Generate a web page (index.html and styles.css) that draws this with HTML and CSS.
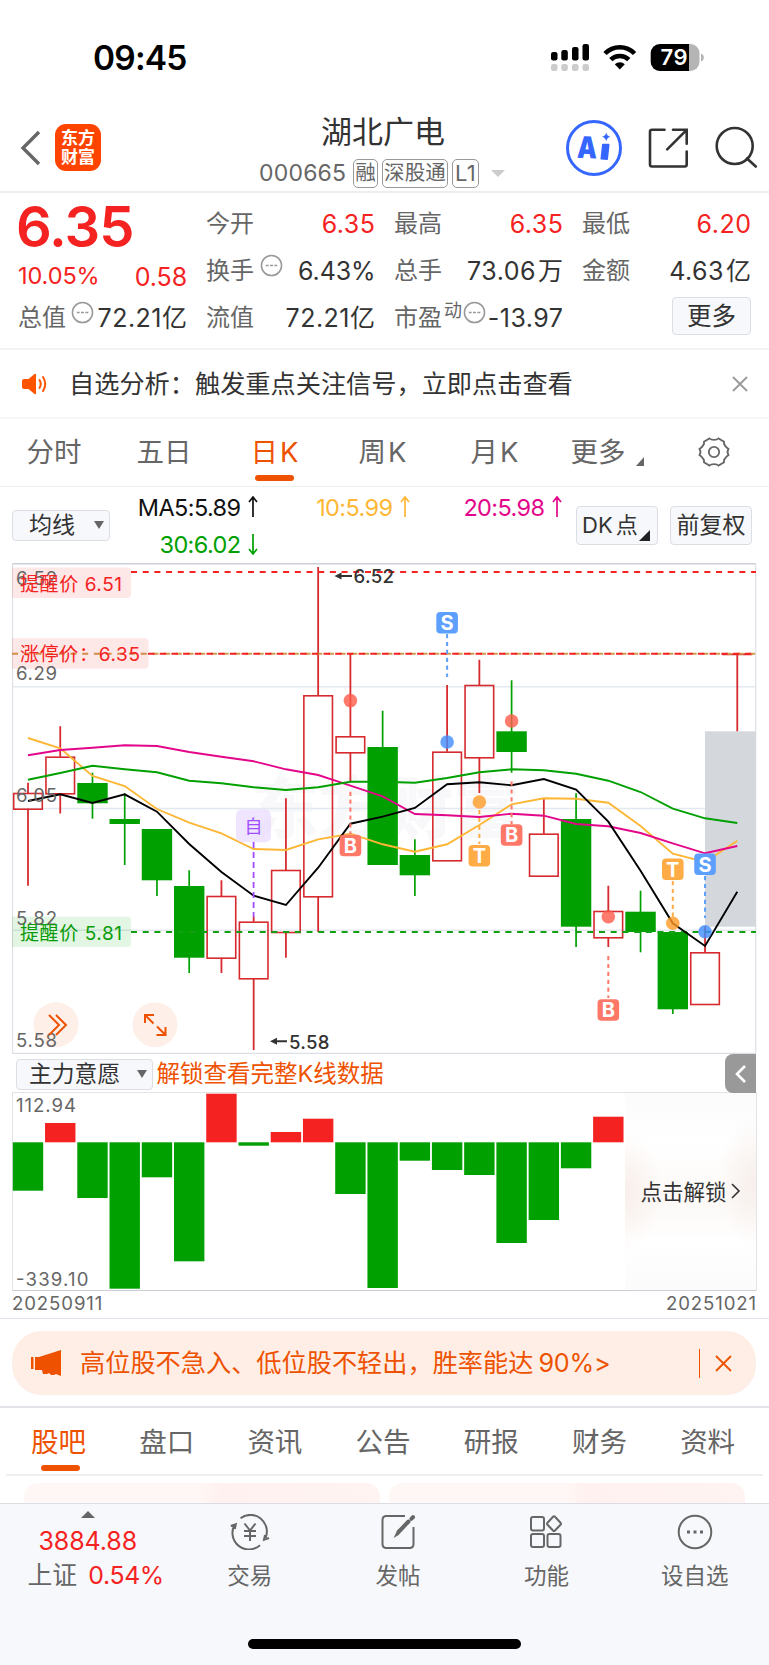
FILE: index.html
```html
<!DOCTYPE html>
<html lang="zh-CN">
<head>
    <meta charset="UTF-8">
    <meta name="viewport" content="width=device-width, initial-scale=1.0">
    <title>湖北广电 000665</title>
    <link rel="stylesheet" href="styles.css">
</head>
<body>
    <div class="status-bar">
        <span class="time">09:45</span>
        <svg class="status-icons" width="156" height="44" viewBox="550 36 156 44">
            <g fill="#000">
                <rect x="551" y="52" width="6.500" height="8.500" rx="2.200"/>
                <rect x="561.300" y="50" width="6.500" height="10.500" rx="2.200"/>
                <rect x="572" y="47" width="6.500" height="13.500" rx="2.200"/>
                <rect x="582.500" y="44" width="6.500" height="16.500" rx="2.200"/>
            </g>
            <g fill="#ccc">
                <rect x="551" y="64" width="6.500" height="7" rx="2.200"/>
                <rect x="561.300" y="64" width="6.500" height="7" rx="2.200"/>
                <rect x="572" y="64" width="6.500" height="7" rx="2.200"/>
                <rect x="582.500" y="64" width="6.500" height="7" rx="2.200"/>
            </g>
            <g fill="none" stroke="#000" stroke-width="4.6">
                <path d="M605 53.500a20.500 20.500 0 0 1 29.600 0"/>
                <path d="M610.800 59.700a12.800 12.800 0 0 1 18 0"/>
            </g>
            <path d="M619.800 69.500l-5-5.300a7.200 7.200 0 0 1 10 0z"/>
            <path d="M659.700 44H690v27h-30.300a9 9 0 0 1-9-9v-9a9 9 0 0 1 9-9z"/>
            <path d="M689 44h1.500a9 9 0 0 1 9 9v9a9 9 0 0 1-9 9H689z" fill="#b4b4b4"/>
            <path d="M701 53.500q2.800 1 2.800 4t-2.800 4z" fill="#b4b4b4"/>
            <text class="battery" x="660.500" y="65.200" textLength="27">79</text>
        </svg>
    </div>

    <div class="nav">
        <svg class="back" width="22" height="38" viewBox="0 0 22 38"><path d="M19 3L3 19l16 16"/></svg>
        <div class="logo">东方<br>财富</div>
        <div class="stock">
            <div class="stock-name">湖北广电</div>
            <div class="stock-code">000665<span class="tag first">融</span><span class="tag">深股通</span><span class="tag l1">L1</span><i class="caret"></i></div>
        </div>
        <svg class="nav-icons" width="196" height="60" viewBox="564 118 196 60">
            <circle cx="594" cy="148" r="26.500" fill="none" stroke="#3566ff" stroke-width="3"/>
            <text class="ai" x="577" y="158" textLength="20" lengthAdjust="spacingAndGlyphs" transform="rotate(2 585 150)">A</text>
            <path d="M603 143.800h5.500q1.200 0 1 1.200l-1.500 14q0 1-1.200.9l-5.300-.3q-1.200 0-1-1.200l1.500-13.600q0-1 1-1z" fill="#3566ff"/>
            <path d="M606.200 132.500q.8 3.700 4.300 4.200-3.500.8-4.300 4.600-.8-3.900-4.300-4.600 3.500-.5 4.300-4.200z" fill="#3566ff"/>
            <g class="line-icon">
                <path d="M664.500 129.800h-12.500q-2 0-2 2v32.700q0 2 2 2h32.700q2 0 2-2v-13"/>
                <path d="M673 129.800h13.700v14M686.700 129.800l-19.500 19.500"/>
                <circle cx="734.700" cy="146" r="18"/>
                <path d="M747 158.500l8.800 8"/>
            </g>
        </svg>
    </div>

    <div class="quote">
        <div class="quote-main">
            <div class="price">6.35</div>
            <div class="change"><span class="pct">10.05%</span><span>0.58</span></div>
            <div class="cell"><label>总值</label><svg class="more-dot" viewBox="0 0 24 24"><circle cx="12" cy="12" r="10.500"/><path d="M6 12h3M10.500 12h3M15 12h3"/></svg><b>72.21亿</b></div>
        </div>
        <div class="quote-grid">
            <div class="cell"><label>今开</label><b class="red">6.35</b></div>
            <div class="cell"><label>最高</label><b class="red">6.35</b></div>
            <div class="cell"><label>最低</label><b class="red">6.20</b></div>
            <div class="cell"><label>换手</label><svg class="more-dot gap" viewBox="0 0 24 24"><circle cx="12" cy="12" r="10.500"/><path d="M6 12h3M10.500 12h3M15 12h3"/></svg><b class="pct-value">6.43%</b></div>
            <div class="cell"><label>总手</label><b>73.06<span class="unit">万</span></b></div>
            <div class="cell"><label>金额</label><b>4.63<span class="unit">亿</span></b></div>
            <div class="cell"><label>流值</label><b>72.21亿</b></div>
            <div class="cell"><label>市盈</label><sup>动</sup><svg class="more-dot tight" viewBox="0 0 24 24"><circle cx="12" cy="12" r="10.500"/><path d="M6 12h3M10.500 12h3M15 12h3"/></svg><b>-13.97</b></div>
            <div class="cell end"><button class="btn more">更多</button></div>
        </div>
    </div>

    <div class="notice">
        <svg width="28" height="24" viewBox="0 0 28 24">
            <path d="M3 7h4.500l6-5q1.500-1 1.500 1v18q0 2-1.500 1l-6-5H3q-2 0-2-2V9q0-2 2-2z" fill="#ff5500"/>
            <path d="M18.500 8q2.500 4 0 8M22 5q4.500 7 0 14" fill="none" stroke="#ff5500" stroke-width="2" stroke-linecap="round"/>
        </svg>
        <span class="notice-text">自选分析：触发重点关注信号，立即点击查看</span>
        <svg class="close" width="16" height="16" viewBox="0 0 16 16"><path d="M1 1l14 14M15 1L1 15"/></svg>
    </div>

    <div class="period-tabs">
        <span>分时</span>
        <span>五日</span>
        <span class="k active">日K</span>
        <span class="k">周K</span>
        <span class="k">月K</span>
        <span>更多<i class="corner"></i></span>
        <svg width="32" height="30" viewBox="0 0 32 30">
            <path d="M11.500 1.500q1.200 1.300 4.500 1.300t4.500-1.300L26 4.600q-.8 3.400 4.500 7.400-2 3 0 6-5.300 4-4.500 7.400l-5.500 3.100q-1.200-1.300-4.500-1.300t-4.500 1.300L6 25.400q.8-3.400-4.500-7.400 2-3 0-6Q6.800 8 6 4.600z"/>
            <circle cx="16" cy="15" r="5.200"/>
        </svg>
    </div>

    <div class="ma-bar">
        <button class="btn select ma-select">均线<i class="down"></i></button>
        <div class="ma-legend">
            <span class="ma5">MA5:5.89<svg viewBox="0 0 10 22"><path d="M5 21V1M1 6l4-5 4 5"/></svg></span>
            <span class="ma10">10:5.99<svg viewBox="0 0 10 22"><path d="M5 21V1M1 6l4-5 4 5"/></svg></span>
            <span class="ma20">20:5.98<svg viewBox="0 0 10 22"><path d="M5 21V1M1 6l4-5 4 5"/></svg></span>
            <span class="ma30">30:6.02<svg viewBox="0 0 10 22"><path d="M5 1v20M1 16l4 5 4-5"/></svg></span>
        </div>
        <button class="btn dk">DK<span>点</span><i class="dk-corner"></i></button>
        <button class="btn adjust">前复权</button>
    </div>

    <svg class="k-chart" width="745" height="492" viewBox="12 563 745 492">
        <text class="watermark" x="252" y="833">东方财富</text>
        <g stroke="#e4e8f0" stroke-width="1.500">
            <path d="M12 686.700h744M12 808.500h744M12 930.300h744"/>
        </g>
        <path d="M12 563.700h744" stroke="#cdcfd8" stroke-width="1.400"/>
        <path d="M12.500 563v490.500M755.700 563v490.500M12 1053.300h744" stroke="#dcdfe5" stroke-width="1.200" fill="none"/>
        <rect x="705" y="731.300" width="51" height="195.400" fill="#d4d7dc"/>
        <g id="candles"></g>
        <g id="levels" fill="none" stroke-width="2">
            <path d="M131 572h625" stroke="#f52222" stroke-dasharray="6 5.700"/>
            <path d="M12 653.800h744" stroke="#cf9a4c" stroke-dasharray="6 5.700"/>
            <path d="M148 653.800h608" stroke="#f52222" stroke-dasharray="6.500 5.200"/>
            <path d="M131 932h625" stroke="#12a012" stroke-dasharray="6 5.700"/>
        </g>
        <g id="averages"></g>
        <g>
            <path class="tip-up" d="M12 567.500h115q4 0 4 4v22.500q0 4-4 4H12z"/>
            <path class="tip-up" d="M12 638.300h132.500q4 0 4 4v22.500q0 4-4 4H12z"/>
            <path class="tip-down" d="M12 916.700h115q4 0 4 4v22.300q0 4-4 4H12z"/>
        </g>
        <g fill="#fef0e9">
            <circle cx="56" cy="1024.700" r="22.500"/>
            <circle cx="155" cy="1024.700" r="22.500"/>
        </g>
        <g class="axis">
            <text x="16" y="584.500" textLength="41">6.52</text>
            <text x="16" y="679.700" textLength="41">6.29</text>
            <text x="16" y="801.700" textLength="41">6.05</text>
            <text x="16" y="924.700" textLength="41">5.82</text>
            <text x="16" y="1047" textLength="41">5.58</text>
        </g>
        <g class="tip-text">
            <text x="20" y="590.500" textLength="102">提醒价 6.51</text>
            <text x="20" y="661" textLength="120">涨停价：6.35</text>
            <text x="20" y="940" textLength="102" class="green">提醒价 5.81</text>
        </g>
        <g fill="none" stroke="#ee5200" stroke-width="2">
            <path d="M49 1015l10 10-10 10M56 1015l10 10-10 10"/>
            <path d="M145 1023v-8h9M145 1015l8.500 8.500M165.500 1027v8h-9M165.500 1035l-8.500-8.500"/>
        </g>
        <g class="extreme">
            <path d="M341 576h11M276 1041.300h11" stroke="#333" stroke-width="2"/>
            <path d="M334.500 576l7-3.500v7zM270 1041.300l7-3.500v7z"/>
            <text x="353.500" y="582.800" textLength="40.500">6.52</text>
            <text x="289" y="1048.800" textLength="40.500">5.58</text>
        </g>
        <g id="marks"></g>
    </svg>

    <div class="indicator-bar">
        <button class="btn select ind-select">主力意愿<i class="down"></i></button>
        <span class="unlock-tip">解锁查看完整K线数据</span>
        <div class="drawer"><svg width="12" height="20" viewBox="0 0 12 20"><path d="M10 2L2 10l8 8"/></svg></div>
    </div>

    <div class="sub-chart">
        <svg id="bars" width="744" height="198" viewBox="12 1092 744 198">
            <g id="barGroup"></g>
            <g class="axis">
                <text x="16" y="1111.700" textLength="60">112.94</text>
                <text x="16" y="1285.500" textLength="72.500">-339.10</text>
            </g>
        </svg>
        <div class="unlock">点击解锁<svg width="10" height="16" viewBox="0 0 10 16"><path d="M1 1l7 7-7 7"/></svg></div>
    </div>
    <div class="dates"><span>20250911</span><span>20251021</span></div>

    <div class="promo">
        <svg width="32" height="28" viewBox="0 0 32 28">
            <path d="M1 8h2.500v12H1zM5 8h4L31 1v26l-5-2-2 1-3 0-2-2-2 1-4 0-1-4H5z" fill="#ee5200"/>
        </svg>
        <span class="promo-text">高位股不急入、低位股不轻出，胜率能达<em>90%&gt;</em></span>
        <i class="sep"></i>
        <svg class="promo-close" width="17" height="17" viewBox="0 0 17 17"><path d="M1 1l15 15M16 1L1 16"/></svg>
    </div>

    <div class="info-tabs">
        <span class="active">股吧</span>
        <span>盘口</span>
        <span>资讯</span>
        <span>公告</span>
        <span>研报</span>
        <span>财务</span>
        <span>资料</span>
    </div>
    <div class="cards">
        <div class="card"></div>
        <div class="card"></div>
    </div>

    <div class="bottom-bar">
        <div class="index">
            <i class="up"></i>
            <div class="index-value">3884.88</div>
            <div class="index-pct">上证<span>0.54%</span></div>
        </div>
        <div class="action">
            <svg width="40" height="36" viewBox="0 0 40 36">
                <path d="M10.500 4.200A16.500 16.500 0 0 1 35.500 24M30 31.200A16.500 16.500 0 0 1 4.500 11M.8 12l5-1.800-1 4.800M39 24l-5 1.800 1-4.800"/>
                <path d="M14.500 9.500l5.500 7 5.500-7M20 16.500V27M14 17h12M14 22h12"/>
            </svg>
            交易
        </div>
        <div class="action">
            <svg width="40" height="36" viewBox="0 0 40 36">
                <path d="M27 2H8.500Q4.500 2 4.500 6v24q0 4 4 4h23q4 0 4-4V13"/>
                <path d="M33.500 4.800l1.500-1.700M30.500 7.500L20.500 18" stroke-width="4" stroke-linecap="round"/><path d="M18.500 18l-3 6 6-3.500z" fill="#666" stroke="none"/>
            </svg>
            发帖
        </div>
        <div class="action">
            <svg width="40" height="36" viewBox="0 0 40 36">
                <rect x="5" y="3" width="13" height="13.500" rx="2"/>
                <rect x="5" y="20" width="13" height="13" rx="2"/>
                <rect x="21.500" y="20" width="13" height="13" rx="2"/>
                <path d="M27 2.800q1-1 2 0l5.500 5.900q1 1 0 2L29 16.500q-1 1-2 0l-5.500-5.800q-1-1 0-2z"/>
            </svg>
            功能
        </div>
        <div class="action">
            <svg width="40" height="36" viewBox="0 0 40 36">
                <circle cx="20" cy="18" r="16.300"/>
                <path d="M12 18h3M18.500 18h3M25 18h3" stroke-width="3"/>
            </svg>
            设自选
        </div>
        <div class="home"></div>
    </div>
    <script src="script.js"></script>
</body>
</html>
```
FILE: styles.css
```css
body {
    margin: 0;
    width: 769px;
    height: 1665px;
    overflow: hidden;
    background: #fff;
    color: #333;
    font-family: Inter, "Noto Sans CJK SC", sans-serif;
    font-size: 24px;
}
* {
    box-sizing: border-box;
}
svg {
    display: block;
    flex: none;
}
i, em {
    font-style: normal;
}
.status-bar {
    height: 108px;
    padding: 36px 63px 0 93px;
    display: flex;
    justify-content: space-between;
}
.time {
    font-size: 33.5px;
    font-weight: 600;
    line-height: 44px;
    color: #000;
    letter-spacing: -0.8px;
}
.battery {
    font-size: 22px;
    font-weight: 600;
    fill: #fff;
}

/* header */
.nav {
    height: 85px;
    padding: 10px 9px 0 20px;
    display: flex;
    align-items: flex-start;
    border-bottom: 2px solid #ededf0;
}
.back {
    margin-top: 11px;
    fill: none;
    stroke: #666;
    stroke-width: 3.4;
}
.logo {
    width: 46px;
    height: 47px;
    margin: 6px 0 0 13px;
    padding-top: 5px;
    border-radius: 11px;
    background: #ff4400;
    color: #fff;
    font-size: 17px;
    font-weight: 700;
    line-height: 19px;
    text-align: center;
}
.stock {
    width: 463px;
    padding-left: 158px;
}
.stock-name {
    margin-left: 62px;
    margin-top: -5px;
    font-size: 31px;
    line-height: 38px;
}
.stock-code {
    display: flex;
    align-items: center;
    margin-top: 8px;
    height: 29px;
    font-size: 23px;
    line-height: 29px;
    letter-spacing: 0.2px;
    color: #666;
}
.tag {
    height: 29px;
    margin-left: 4px;
    padding: 0 1px;
    border: 1.5px solid #999;
    border-radius: 5px;
    font-size: 20.500px;
    line-height: 26px;
}
.tag.first {
    margin-left: 7px;
}
.tag.l1 {
    padding: 0 2px;
    font-size: 22px;
}
.caret {
    margin: 0 0 0 12px;
    border: 7px solid transparent;
    border-top-color: #ccc;
    border-bottom: 0;
}
.ai {
    font-size: 30px;
    font-weight: 900;
    fill: #3566ff;
}
.line-icon {
    fill: none;
    stroke: #333;
    stroke-width: 2.6;
    stroke-linecap: round;
}

/* quote */
.quote {
    height: 157px;
    padding: 7px 18px 0 18px;
    display: flex;
    border-bottom: 2px solid #f2f2f4;
}
.quote-main {
    width: 169px;
    margin-right: 19px;
}
.price {
    height: 53px;
    font-size: 56px;
    font-weight: 600;
    line-height: 54px;
    letter-spacing: -1px;
    color: #f52222;
    margin-left: -2px;
}
.change {
    display: flex;
    justify-content: space-between;
    height: 41px;
    padding-top: 4px;
    font-size: 25px;
    line-height: 41px;
    letter-spacing: -0.1px;
    color: #f52222;
}
.pct {
    font-size: 23.5px;
    line-height: 38px;
}
.quote-grid {
    display: grid;
    grid-template-columns: 169px 169px 169px;
    grid-template-rows: 47px 47px 47px;
    column-gap: 19px;
}
.cell {
    display: flex;
    height: 47px;
    line-height: 48px;
    white-space: nowrap;
}
.cell label {
    color: #666;
}
.cell b {
    margin-left: auto;
    font-size: 25px;
    font-weight: 400;
    letter-spacing: 0.5px;
    margin-right: -0.5px;
}
.cell b.red {
    color: #f52222;
}
.cell b.pct-value {
    letter-spacing: -0.1px;
}
.cell sup {
    margin-left: 2px;
    font-size: 18px;
    line-height: 33px;
    color: #666;
    vertical-align: baseline;
}
.unit {
    margin-left: 2px;
}
.cell.end {
    justify-content: flex-end;
    padding-top: 3px;
}
.more-dot {
    width: 23px;
    height: 23px;
    margin: 7px -8px 0 5px;
    fill: none;
    stroke: #999;
    stroke-width: 1.6;
}
.more-dot.gap {
    margin-left: 6px;
}
.more-dot.tight {
    margin-left: 1px;
}
.btn {
    border: 1.5px solid #dcdee4;
    border-radius: 4px;
    background: #f7f8fb;
    padding: 0;
    color: #333;
    font-family: inherit;
    font-size: 23px;
    white-space: nowrap;
}
.more {
    width: 79px;
    height: 38px;
    font-size: 24.5px;
    line-height: 35px;
}

.notice {
    height: 69px;
    display: flex;
    align-items: center;
    padding: 1px 21px 0;
    border-bottom: 2px solid #f5f5f7;
}
.notice-text {
    margin-left: 20px;
    font-size: 25.2px;
    line-height: 40px;
}
.close {
    margin-left: auto;
    fill: none;
    stroke: #999;
    stroke-width: 1.8;
}

/* period tabs */
.period-tabs {
    height: 68px;
    display: grid;
    grid-template-columns: 110px 114px 108px 112px 100px 127px 32px;
    padding-left: 26.5px;
    font-size: 27.500px;
    line-height: 67px;
    color: #666;
    border-bottom: 1.5px solid #efeff2;
}
.period-tabs .k {
    letter-spacing: 2px;
}
.period-tabs svg {
    margin-top: 18px;
    fill: none;
    stroke: #666;
    stroke-width: 1.8;
}
.period-tabs .active {
    color: #ee5200;
}
.period-tabs .active::after,
.info-tabs .active::after {
    content: "";
    display: block;
    width: 39px;
    height: 6px;
    margin: -11px 0 0 4.5px;
    border-radius: 3px;
    background: #ee5200;
}
.corner {
    display: inline-block;
    margin-left: 10px;
    border-left: 8px solid transparent;
    border-bottom: 9px solid #666;
    vertical-align: -4px;
}

/* moving averages */
.ma-bar {
    height: 76px;
    display: flex;
    padding-left: 12px;
}
.select {
    display: flex;
    justify-content: space-between;
    align-items: center;
    height: 31px;
    line-height: 28px;
}
.down {
    border: 5px solid transparent;
    border-top: 8px solid #666;
    border-bottom: 0;
}
.ma-select {
    width: 97.5px;
    margin-top: 22.5px;
    padding: 0 5px 0 16px;
    font-size: 23px;
}
.ma-legend {
    display: grid;
    grid-template-columns: 120px 152px 152px;
    grid-template-rows: 37px 37px;
    justify-items: end;
    margin-left: 28px;
    padding-top: 1.5px;
    line-height: 37px;
    font-size: 23.5px;
}
.ma-legend span {
    display: flex;
    align-items: center;
    letter-spacing: -0.6px;
}
.ma-legend svg {
    width: 10px;
    height: 22px;
    margin-left: 7px;
    fill: none;
    stroke: currentColor;
    stroke-width: 1.7;
}
.ma5 { color: #111; }
.ma10 { color: #fdb735; }
.ma20 { color: #e3068a; }
.ma30 { color: #00a000; }
.dk {
    display: flex;
    width: 82px;
    height: 39px;
    margin: 18.5px 12px 0 14.5px;
    padding-left: 5px;
    line-height: 37px;
    font-size: 22px;
}
.dk span {
    margin-left: 3px;
}
.dk-corner {
    align-self: flex-end;
    margin: 0 0 3px 1px;
    border-left: 11px solid transparent;
    border-bottom: 11px solid #222;
}
.adjust {
    width: 82px;
    height: 39px;
    margin-top: 18.5px;
    line-height: 37px;
}

/* candlestick chart */
.k-chart {
    height: 492px;
    margin: 0 0 -1px 12px;
}
.watermark {
    font-size: 67px;
    font-weight: 900;
    fill: #f8f8fa;
}
.axis {
    font-size: 18.6px;
    fill: #666;
}
.tip-up {
    fill: #f52222;
    fill-opacity: 0.11;
}
.tip-down {
    fill: #00a000;
    fill-opacity: 0.11;
}
.tip-text {
    font-size: 19px;
    fill: #f52222;
}
.tip-text .green {
    fill: #0a9c0a;
}
.extreme {
    font-size: 18.6px;
    font-weight: 500;
    fill: #333;
}
.mark-letter {
    font-size: 20px;
    font-weight: 700;
    fill: #fff;
    text-anchor: middle;
}
.mark-zi {
    font-size: 18px;
    fill: #a04dff;
    text-anchor: middle;
}

.indicator-bar {
    height: 39px;
    display: flex;
    padding: 0 13px 0 16px;
}
.ind-select {
    width: 137px;
    margin-top: 4.5px;
    padding: 0 5px 0 12px;
    font-size: 22.8px;
}
.unlock-tip {
    margin-left: 3.5px;
    font-size: 23.5px;
    line-height: 39px;
    color: #ee5200;
}
.drawer {
    width: 31px;
    height: 39px;
    margin-left: auto;
    padding: 10px 0 0 10px;
    border-radius: 8px 0 0 8px;
    background: #999;
}
.drawer path {
    fill: none;
    stroke: #fff;
    stroke-width: 2.6;
}

/* histogram */
.sub-chart {
    display: flex;
    width: 745px;
    height: 199px;
    margin: -1px 0 0 11.500px;
    border: 1.5px solid #e1e3e8;
    border-bottom-color: #cdcfd8;
}
#bars {
    margin: -1px -131px 0 -1px;
}
.unlock {
    display: flex;
    align-items: center;
    width: 131px;
    padding: 0 0 2px 16px;
    font-size: 21.500px;
    white-space: nowrap;
    background:
        radial-gradient(ellipse 38px 60px at 0 50%, #f9efeb, transparent),
        radial-gradient(ellipse 38px 65px at 100% 45%, #f7efeb, transparent),
        linear-gradient(#fbfbfc, #fff 25%, #fcf9f7 55%, #fff 75%, #fbfbfc);
}
.unlock svg {
    margin-left: 4px;
    fill: none;
    stroke: #333;
    stroke-width: 1.6;
}
.dates {
    display: flex;
    justify-content: space-between;
    height: 28px;
    padding: 0 12px 0 12px;
    border-bottom: 1.5px solid #e2e2ea;
    font-size: 18.6px;
    line-height: 25px;
    letter-spacing: 0.9px;
    color: #666;
}

.promo {
    display: flex;
    align-items: center;
    height: 64px;
    margin: 12px 13px 0 12px;
    padding: 0 24px 0 18px;
    border-radius: 30px;
    background: #feeee6;
    color: #ee5200;
}
.promo-text {
    margin-left: 18px;
    font-size: 25.2px;
    line-height: 60px;
}
.promo em {
    margin-left: 5px;
    letter-spacing: -0.2px;
}
.sep {
    width: 1.5px;
    height: 29px;
    margin-left: auto;
    background: #ee5200;
}
.promo-close {
    margin-left: 15px;
    fill: none;
    stroke: #ee5200;
    stroke-width: 1.8;
}

.info-tabs {
    display: grid;
    grid-template-columns: repeat(7, 108.2px);
    height: 70px;
    margin: 11px 6px 0;
    padding-left: 25px;
    font-size: 27.5px;
    line-height: 72px;
    color: #666;
    border-bottom: 2px solid #efeff1;
    position: relative;
}
.info-tabs::before {
    content: "";
    position: absolute;
    left: -6px;
    top: 0;
    width: 769px;
    height: 1.5px;
    background: #e4e4e8;
}
.info-tabs .active {
    color: #ee5200;
}
.info-tabs .active::after {
    margin: -13px 0 0 9.5px;
}
.cards {
    display: flex;
    gap: 9px;
    height: 27px;
    padding: 7px 24px 0;
}
.card {
    width: 356px;
    border-radius: 14px 14px 0 0;
    background: linear-gradient(90deg, #fff7f5 50%, #fff1ef 55%, #fff4f2);
}

/* bottom bar */
.bottom-bar {
    position: relative;
    display: flex;
    height: 162px;
    border-top: 1.5px solid #dcdde2;
    background: #f7f8fb;
    color: #666;
    font-size: 22.5px;
}
.index {
    display: flex;
    flex-direction: column;
    align-items: center;
    width: 175.5px;
    padding: 7px 0 0;
    font-size: 25px;
    letter-spacing: -0.1px;
}
.up {
    border: 7px solid transparent;
    border-bottom-color: #666;
    border-top: 0;
}
.index-value {
    margin-top: 7px;
    line-height: 32px;
    color: #f52222;
}
.index-pct {
    padding-left: 16px;
    line-height: 36px;
    font-size: 24.8px;
    letter-spacing: 0;
}
.index-pct span {
    margin-left: 11px;
    color: #f52222;
    letter-spacing: -0.3px;
}
.action {
    display: flex;
    flex-direction: column;
    align-items: center;
    width: 148.4px;
    padding-top: 10px;
    line-height: 38px;
}
.action svg {
    margin-bottom: 7px;
    fill: none;
    stroke: #666;
    stroke-width: 2;
}
.home {
    position: absolute;
    left: 248px;
    bottom: 16px;
    width: 273px;
    height: 10px;
    border-radius: 5px;
    background: #000;
}
```
FILE: script.js
```js
const STEP = 32.24;
const FIRST = 28;
const cx = i => FIRST + STEP * i;

// direction, high, low, body top, body bottom
const candles = [
    ['up', 782.7, 885.7, 793, 808.7],
    ['up', 726.3, 813.5, 756.7, 793.3],
    ['down', 772.7, 818.7, 783, 803.3],
    ['down', 793.3, 865, 819, 824],
    ['down', 829, 896, 829, 880.3],
    ['down', 870.3, 973, 886, 957.7],
    ['up', 880.3, 973, 896, 957.7],
    ['up', 916.7, 1050, 921.7, 978.3],
    ['up', 798.3, 957.7, 870, 932],
    ['up', 567, 932, 695.3, 896.3],
    ['up', 654, 781.7, 736.3, 752.3],
    ['down', 710.7, 865, 747, 865],
    ['down', 839.3, 896, 855, 875.3],
    ['up', 685, 860.3, 751.7, 860.3],
    ['up', 659.7, 793, 685, 757.3],
    ['down', 680.3, 772.7, 731.3, 752],
    ['up', 798.3, 875.7, 833.7, 875.7],
    ['down', 793.3, 947, 819, 926.7],
    ['up', 885.7, 947, 911, 937.3],
    ['down', 890.7, 952.3, 911.7, 932],
    ['down', 932, 1014, 932, 1009.3],
    ['up', 926.7, 1004, 952.3, 1004]
];

const averages = {
    '#fdb735': [738, 748.3, 776, 786, 809, 822.7, 833.3, 849, 850, 839.3, 833.7, 844.3, 851.7, 844.3, 825, 804.4, 798.3, 798.7, 802.7, 826, 853.7, 862, 840.7],
    '#e3068a': [755.3, 750, 747.7, 745.3, 746, 752, 756.7, 761.3, 769.3, 775, 785.7, 796.3, 814, 815.3, 817, 813.7, 815.7, 824, 826.3, 833, 843.3, 853.3, 846],
    '#00a000': [779.7, 773, 765.7, 769.3, 772.3, 780.7, 783.3, 787.3, 790, 787.3, 781.7, 781.7, 782.7, 778, 772.3, 769.3, 770.3, 773.7, 780.7, 792, 808.7, 818.3, 823],
    '#000000': [801, 794.3, 803, 794.3, 811.7, 844, 872, 895.7, 905, 867.7, 823.7, 816.7, 808, 784.3, 782.3, 785.3, 779, 789.7, 821.7, 870.7, 923.3, 946, 891.7]
};

// index, letter, badge y, dash start, dash end, dot y
const marks = [
    [13, 'S', 622.8, 634, 677, 742],
    [10, 'B', 845.5, 791.7, 834, 700.6],
    [15, 'B', 835, 781.5, 824, 721],
    [14, 'T', 855.7, 810, 844, 802],
    [18, 'B', 1010, 956, 998, 916.7],
    [20, 'T', 869.3, 881, 917, 923.3],
    [21, 'S', 864.3, 876, 918, 931.7]
];
const markColor = { S: '#5c9ffc', B: '#fe7868', T: '#ffac47' };
const dotColor = { S: '#3f8cff', B: '#ff5a48', T: '#ff9a26' };

let html = '';
candles.forEach(([dir, high, low, top, bottom], i) => {
    const x = cx(i);
    if (dir === 'down') {
        html += `<path d="M${x} ${high}V${low}" stroke="#00a000" stroke-width="1.7"/>`;
        html += `<rect x="${x - 15.2}" y="${top}" width="30.4" height="${bottom - top}" fill="#00a000"/>`;
    } else {
        html += `<path d="M${x} ${high}V${top}M${x} ${bottom}V${low}" stroke="#d62a2e" stroke-width="1.8"/>`;
        html += `<rect x="${x - 14.3}" y="${top + 0.5}" width="28.6" height="${bottom - top}" fill="none" stroke="#d62a2e" stroke-width="1.6"/>`;
    }
});
// last candle opens at the limit price, so it has no body
html += `<path d="M${cx(22) - 15} 654.300h30M${cx(22)} 654V731.300" stroke="#d62a2e" stroke-width="1.8"/>`;
document.getElementById('candles').innerHTML = html;

html = '';
for (const color in averages) {
    const points = averages[color].map((y, i) => `${cx(i)},${y}`).join(' ');
    html += `<polyline points="${points}" fill="none" stroke="${color}" stroke-width="1.9"/>`;
}
document.getElementById('averages').innerHTML = html;

html = `<rect x="236" y="809.300" width="35" height="33" rx="6" fill="#e9dcff" fill-opacity=".75"/>
    <text class="mark-zi" x="253.500" y="832.500">自</text>
    <path d="M253.600 842V917" stroke="#a04dff" stroke-width="1.8" stroke-dasharray="6 4"/>`;
marks.forEach(([i, letter, y, from, to, dot]) => {
    const x = cx(i);
    html += `<path d="M${x} ${from}V${to}" stroke="${markColor[letter]}" stroke-width="2" stroke-dasharray="4.200 3.700"/>`;
    html += `<circle cx="${x}" cy="${dot}" r="6.800" fill="${dotColor[letter]}" fill-opacity=".8"/>`;
    html += `<rect x="${x - 10.8}" y="${y - 10.8}" width="21.6" height="21.6" rx="4" fill="${markColor[letter]}"/>`;
    html += `<text class="mark-letter" x="${x}" y="${y + 7.3}">${letter}</text>`;
});
document.getElementById('marks').innerHTML = html;

const ZERO = 1142.3;
const ends = [1190.7, 1123, 1198, 1288.7, 1177.3, 1261.3, 1093.7, 1145.7, 1132, 1118.7, 1194, 1288, 1160.7, 1170, 1175, 1243, 1220, 1168.3, 1116.7];
document.getElementById('barGroup').innerHTML = ends.map((y, i) =>
    `<rect x="${cx(i) - 15.2}" y="${Math.min(y, ZERO)}" width="30.4" height="${Math.abs(y - ZERO)}" fill="${y < ZERO ? '#f52222' : '#00a000'}"/>`
).join('');
```
